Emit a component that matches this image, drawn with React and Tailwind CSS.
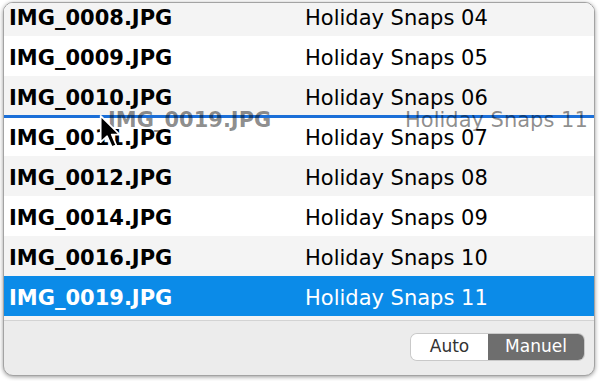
const rows = [
  ['IMG_0008.JPG', 'Holiday Snaps 04'],
  ['IMG_0009.JPG', 'Holiday Snaps 05'],
  ['IMG_0010.JPG', 'Holiday Snaps 06'],
  ['IMG_0011.JPG', 'Holiday Snaps 07'],
  ['IMG_0012.JPG', 'Holiday Snaps 08'],
  ['IMG_0014.JPG', 'Holiday Snaps 09'],
  ['IMG_0016.JPG', 'Holiday Snaps 10'],
  ['IMG_0019.JPG', 'Holiday Snaps 11'],
  ['', ''],
];

const font = { fontFamily: '"DejaVu Sans", "Liberation Sans", sans-serif' };

const App = () => {
  return (
    <div className="w-[600px] h-[381px] bg-white pl-[3px] pt-[2px]" style={font}>
      {/* Window */}
      <div className="relative w-[592px] h-[374px] rounded-[10px] border border-[#a3a3a3] bg-[#ececec] overflow-hidden shadow-[0_1px_4px_rgba(0,0,0,0.4)] flex flex-col">
        {/* Table */}
        <div className="h-[317px] overflow-hidden bg-white">
          <div className="-mt-[7px]">
            {rows.map(([file, title], i) => {
              const selected = i === 7;
              const bg = selected ? 'bg-[#0b8be8] text-white' : i % 2 === 0 ? 'bg-[#f4f4f4] text-black' : 'bg-white text-black';
              return (
                <div key={i} className={`flex h-[40px] items-center pt-[6px] text-[21px] ${bg}`}>
                  <div className="w-[296px] pl-[5px] font-bold">{file}</div>
                  <div className="pl-[5px]">{title}</div>
                </div>
              );
            })}
          </div>
        </div>

        {/* Footer */}
        <div className="flex-1 border-t border-[#d3d3d3] flex items-center justify-end pr-[10px] pb-[2px]">
          <div className="flex h-[26px] rounded-[6px] overflow-hidden text-[17px] shadow-[0_0_0_1px_#c9c9c9]">
            <div className="w-[77px] bg-white text-[#333] flex items-center justify-center">Auto</div>
            <div className="w-[96px] bg-[#6e6e6e] text-white flex items-center justify-center">Manuel</div>
          </div>
        </div>

        {/* Drop indicator */}
        <div className="absolute left-0 right-0 top-[112px] h-[3px] bg-[#1b6fd8]" />

        {/* Drag ghost */}
        <div className="absolute left-[104px] top-[105px] w-[500px] flex text-[21px] leading-[24px] text-black/45">
          <div className="w-[297px] font-bold">IMG_0019.JPG</div>
          <div>Holiday Snaps 11</div>
        </div>

        {/* Cursor */}
        <svg className="absolute left-[95px] top-[111px]" width="22" height="36" viewBox="0 0 13 21">
          <path d="M1 1 L1 16.5 L4.8 13 L7.6 19.4 L10.2 18.3 L7.5 12 L12.2 12 Z" fill="#000" stroke="#fff" strokeWidth="1" strokeLinejoin="round" />
        </svg>
      </div>
    </div>
  );
};

export default App;
